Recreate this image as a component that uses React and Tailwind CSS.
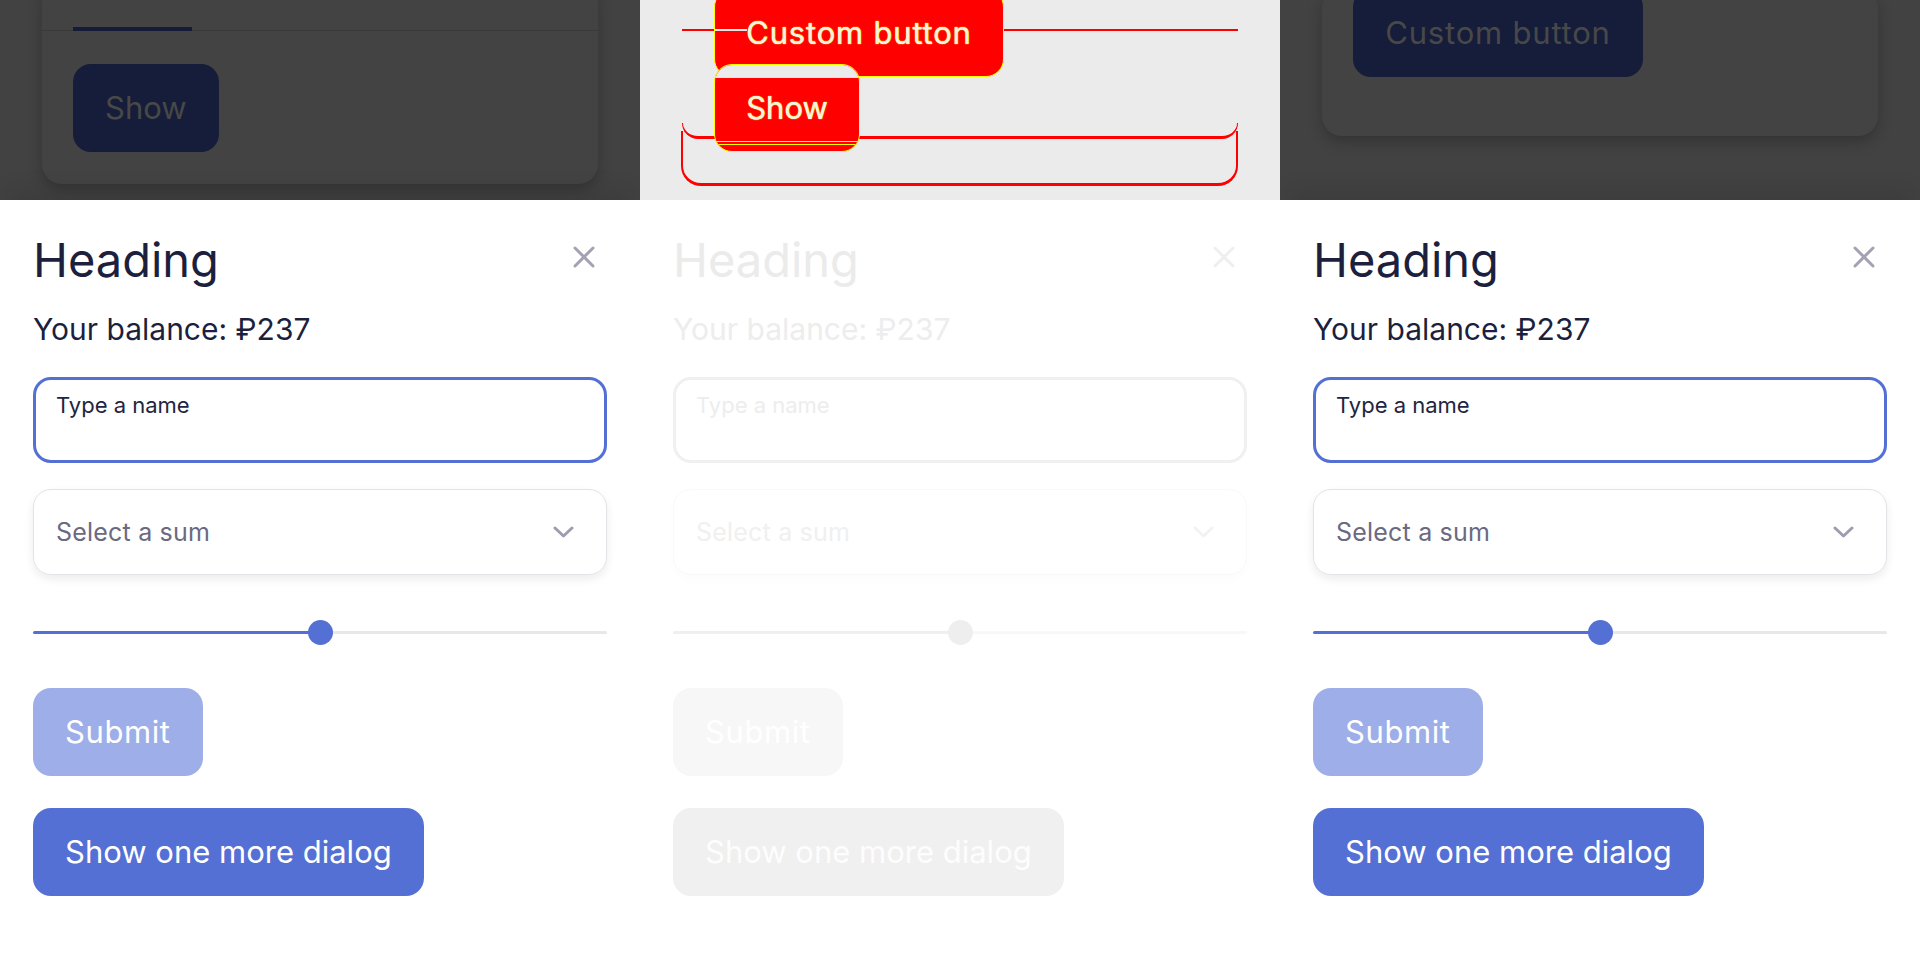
import React from 'react';

// Класс-наборы для обычного диалога и «выцветшего» (колонка diff)
const NORMAL = {
    dialog: 'bg-white shadow-[0_-14px_24px_-6px_rgba(0,0,0,0.10)]',
    heading: 'text-[#1c1f3e]',
    icon: 'text-[#a3a2b4]',
    balance: 'text-[#1c1f3e]',
    input: 'border-[#5470d4]',
    label: 'text-[#23253f]',
    select: 'border-[#e3e3e8] shadow-[0_4px_10px_rgba(0,0,0,0.08)]',
    selectText: 'text-[#6b6a80]',
    chevron: 'text-[#9e9db0]',
    fill: 'bg-[#5470d4]',
    track: 'bg-[#e8e8ec]',
    thumb: 'bg-[#5470d4]',
    submit: 'bg-[#9eaee8] text-white',
    main: 'bg-[#5470d4] text-white',
};

const FADED = {
    dialog: 'bg-white',
    heading: 'text-[#ebebeb]',
    icon: 'text-[#efefef]',
    balance: 'text-[#ededed]',
    input: 'border-[#f0f0f0]',
    label: 'text-[#ededed]',
    select: 'border-[#f9f9f9] shadow-[0_4px_10px_rgba(0,0,0,0.015)]',
    selectText: 'text-[#f0f0f0]',
    chevron: 'text-[#f2f2f2]',
    fill: 'bg-[#efefef]',
    track: 'bg-[#f8f8f8]',
    thumb: 'bg-[#eeeeee]',
    submit: 'bg-[#f7f7f7] text-white',
    main: 'bg-[#f0f0f0] text-[#fdfdfd]',
};

function CloseIcon({ className }) {
    return (
        <svg width="22" height="22" viewBox="0 0 22 22" className={className} fill="none" stroke="currentColor" strokeWidth="3" strokeLinecap="round">
            <path d="M2 2 L20 20 M20 2 L2 20" />
        </svg>
    );
}

function Chevron({ className }) {
    return (
        <svg width="21" height="12" viewBox="0 0 21 12" className={className} fill="none" stroke="currentColor" strokeWidth="3" strokeLinecap="round" strokeLinejoin="round">
            <path d="M2 2 L10.5 10 L19 2" />
        </svg>
    );
}

function Dialog({ faded }) {
    const c = faded ? FADED : NORMAL;

    return (
        <div className={`flex-1 flex flex-col px-[33px] pt-[32px] ${c.dialog}`}>
            {/* Header */}
            <div className="flex items-start justify-between">
                <h2 className={`text-[47px] leading-[56px] font-normal ${c.heading}`}>Heading</h2>
                <CloseIcon className={`mt-[14px] mr-[12px] ${c.icon}`} />
            </div>

            <p className={`mt-[22px] text-[30px] leading-[38px] ${c.balance}`}>Your balance: ₽237</p>

            {/* Name field */}
            <div className={`mt-[29px] h-[86px] rounded-[18px] border-[3px] px-[20px] pt-[12px] ${c.input}`}>
                <span className={`block text-[22px] leading-[26px] ${c.label}`}>Type a name</span>
            </div>

            {/* Sum select */}
            <div className={`mt-[26px] h-[86px] rounded-[18px] border flex items-center justify-between pl-[22px] pr-[32px] ${c.select}`}>
                <span className={`text-[25px] leading-[30px] tracking-[0.2px] ${c.selectText}`}>Select a sum</span>
                <Chevron className={c.chevron} />
            </div>

            {/* Slider */}
            <div className="relative mt-[44px] h-[26px] flex items-center">
                <div className={`h-[3px] w-[287px] rounded-l-full ${c.fill}`} />
                <div className={`h-[3px] flex-1 rounded-r-full ${c.track}`} />
                <div className={`absolute left-[275px] top-[1px] w-[25px] h-[25px] rounded-full ${c.thumb}`} />
            </div>

            <div className="mt-[43px] flex">
                <button className={`h-[88px] px-[32px] rounded-[18px] text-[31px] tracking-[0.6px] ${c.submit}`}>Submit</button>
            </div>
            <div className="mt-[32px] flex">
                <button className={`h-[88px] px-[32px] rounded-[18px] text-[31px] ${c.main}`}>Show one more dialog</button>
            </div>
        </div>
    );
}

// Верх первой колонки: карточка с табами под затемнением
function ActualBackdrop() {
    return (
        <div className="h-[200px] shrink-0 overflow-hidden bg-[#424242]">
            <div className="mx-[42px] -mt-[20px] rounded-[20px] bg-[#434343] shadow-[0_6px_14px_rgba(0,0,0,0.22)] pb-[32px]">
                <div className="h-[51px] border-b border-[#393939] flex items-end px-[31px]">
                    <div className="w-[119px] h-[4px] bg-[#151c38] -mb-px" />
                </div>
                <div className="flex px-[31px] pt-[33px]">
                    <button className="h-[88px] px-[32px] rounded-[18px] bg-[#161d3a] text-[31px] text-[#484848]">Show</button>
                </div>
            </div>
        </div>
    );
}

function ExpectedBackdrop() {
    return (
        <div className="h-[200px] shrink-0 overflow-hidden bg-[#424242]">
            <div className="mx-[42px] -mt-[11px] rounded-[20px] bg-[#434343] shadow-[0_6px_14px_rgba(0,0,0,0.22)] px-[31px] pb-[59px] flex">
                <button className="h-[88px] w-[290px] rounded-[18px] bg-[#161d3a] text-[31px] tracking-[0.8px] text-[#484848]">Custom button</button>
            </div>
        </div>
    );
}

// Diff-картинка: красные пятна различий на выцветшем фоне
function DiffBackdrop() {
    const glow = '[text-shadow:0_0_1px_#ffff00,0_0_1px_#ffff00]';
    return (
        <div className="relative h-[200px] shrink-0 overflow-hidden bg-[#ebebeb]">
            <div className="absolute left-[42px] top-[29px] w-[556px] h-[2px] bg-[#ff0000]" />
            <div className="absolute left-[42px] top-[123px] w-[556px] h-[16px] border-x border-b-[3px] border-[#ff0000] rounded-b-[16px]" />
            <div className="absolute left-[41px] top-[131px] w-[557px] h-[55px] border-x-2 border-b-[3px] border-[#ff0000] rounded-b-[20px]" />

            <div className="absolute left-[74px] top-[-11px] w-[290px] h-[88px] rounded-[18px] bg-[#ff0000] border border-[#ffff00] flex items-center justify-center">
                <span className={`text-[31px] tracking-[0.8px] text-[#f2f2e8] ${glow}`}>Custom button</span>
            </div>
            <div className="absolute left-[75px] top-[29px] w-[32px] h-[2px] bg-[#ebebeb]" />

            <div className="absolute left-[74px] top-[64px] w-[146px] h-[88px] rounded-[18px] bg-[#ff0000] border border-[#ffff00] overflow-hidden flex items-center justify-center">
                <div className="absolute left-0 right-0 top-0 h-[13px] bg-[#ebebeb] border-b border-[#ffff00]" />
                <div className="absolute left-0 right-0 top-[76px] h-px bg-[#ffff00]" />
                <div className="absolute left-0 right-0 top-[79px] h-px bg-[#ffff00]" />
                <span className={`relative text-[31px] text-[#f2f2e8] ${glow}`}>Show</span>
            </div>
        </div>
    );
}

export default function App() {
    return (
        <div className="flex w-[1920px] h-[960px] overflow-hidden bg-white [font-family:Inter,sans-serif]">
            <div className="flex w-[640px] flex-col overflow-hidden">
                <ActualBackdrop />
                <Dialog />
            </div>
            <div className="flex w-[640px] flex-col overflow-hidden">
                <DiffBackdrop />
                <Dialog faded />
            </div>
            <div className="flex w-[640px] flex-col overflow-hidden">
                <ExpectedBackdrop />
                <Dialog />
            </div>
        </div>
    );
}
